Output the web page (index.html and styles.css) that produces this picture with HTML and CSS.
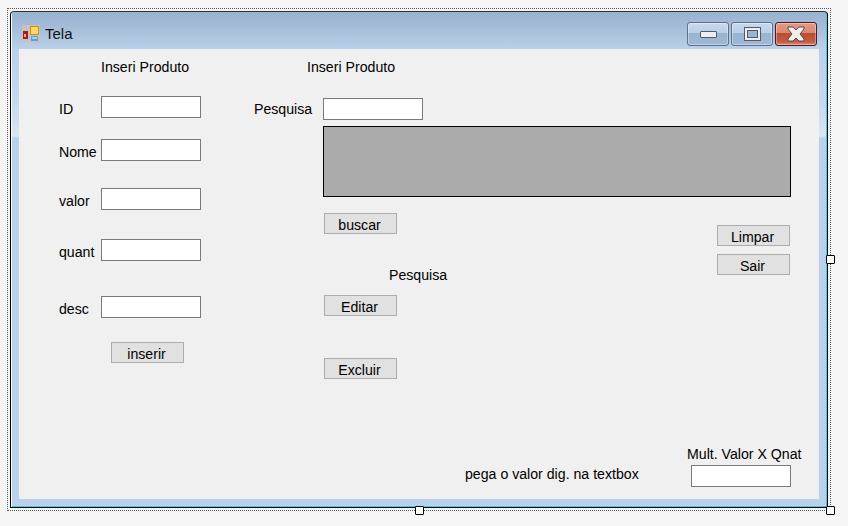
FILE: index.html
```html
<!DOCTYPE html>
<html lang="pt">
<head>
    <meta charset="UTF-8">
    <title>Tela</title>
    <link rel="stylesheet" href="styles.css">
</head>
<body>

    <div class="selection">
        <div class="window">
            <div class="titlebar">
                <svg class="app-icon" width="18" height="18" viewBox="0 0 18 18">
                    <rect width="18" height="18" fill="#c4c4c4"/>
                    <rect x="1" y="6" width="5" height="8" fill="#a81c14"/>
                    <rect x="2" y="9" width="2" height="3" fill="#f0a0a0"/>
                    <rect x="8" y="1" width="9" height="9" fill="#c98f10"/>
                    <rect x="9" y="2" width="7" height="7" fill="#fbd960"/>
                    <rect x="9" y="11" width="7" height="5" fill="#5f9be0"/>
                    <rect x="10" y="12" width="5" height="2" fill="#a9cdf5"/>
                </svg>
                <span class="title">Tela</span>
                <div class="caption-btns">
                    <div class="cap cap-min"><span class="min-glyph"></span></div>
                    <div class="cap cap-max"><span class="max-glyph"></span></div>
                    <div class="cap cap-close">
                        <svg width="20" height="16" viewBox="0 0 20 16">
                            <path d="M2 1h5l3 3 3-3h5v2l-4 5 4 5v2h-5l-3-3-3 3H2v-2l4-5-4-5z" fill="#eee" stroke="#5a4a4a"/>
                        </svg>
                    </div>
                </div>
            </div>

            <div class="client">
                <span class="label l-head1">Inseri Produto</span>
                <span class="label l-head2">Inseri Produto</span>

                <span class="label l-id">ID</span>
                <input class="textbox t-id" type="text">
                <span class="label l-nome">Nome</span>
                <input class="textbox t-nome" type="text">
                <span class="label l-valor">valor</span>
                <input class="textbox t-valor" type="text">
                <span class="label l-quant">quant</span>
                <input class="textbox t-quant" type="text">
                <span class="label l-desc">desc</span>
                <input class="textbox t-desc" type="text">
                <button class="btn b-inserir">inserir</button>

                <span class="label l-pesquisa">Pesquisa</span>
                <input class="textbox t-pesquisa" type="text">
                <div class="grid"></div>
                <button class="btn b-buscar">buscar</button>
                <span class="label l-pesquisa2">Pesquisa</span>
                <button class="btn b-editar">Editar</button>
                <button class="btn b-excluir">Excluir</button>

                <button class="btn b-limpar">Limpar</button>
                <button class="btn b-sair">Sair</button>

                <span class="label l-pega">pega o valor dig. na textbox</span>
                <span class="label l-mult">Mult. Valor X Qnat</span>
                <input class="textbox t-mult" type="text">
            </div>
        </div>

        <span class="handle h-right"></span>
        <span class="handle h-bottom"></span>
        <span class="handle h-corner"></span>
    </div>

</body>
</html>
```

FILE: styles.css
```css
html {
    background-color: #f5f5f5;
}

body {
    box-sizing: border-box;
    height: 526px;
    margin: 0;
    padding: 8px 0 0 7px;
    background-color: #f5f5f5;
    font-family: "Liberation Sans", Arial, sans-serif;
    font-size: 14.15px;
    color: #000;
}

/* Designer selection frame */
.selection {
    position: relative;
    box-sizing: border-box;
    width: 824px;
    height: 503px;
    padding: 2px;
    border: 1px dotted #555;
}

.handle {
    position: absolute;
    box-sizing: border-box;
    width: 9px;
    height: 9px;
    background-color: #fff;
    border: 1px solid #000;
    border-radius: 1px;
}

.h-right { left: 818px; top: 246px; }
.h-bottom { left: 407px; top: 497px; }
.h-corner { left: 818px; top: 497px; }

/* Form window */
.window {
    box-sizing: border-box;
    width: 818px;
    height: 497px;
    display: flex;
    flex-direction: column;
    padding: 0 8px 8px 8px;
    border: 1px solid #000;
    border-top-color: #333;
    border-radius: 4px 4px 0 0;
    box-shadow: inset 1px 0 0 #fff, inset -1px 0 0 #2bd3ee, inset 0 -1px 0 #2bd3ee;
    background: linear-gradient(to bottom, #9ab3d0 0, #a3bbd7 14px, #b9d1ea 37px, #c6d9ee 90px, #d8e5f3 124px, #b9d1ea 126px, #b9d1ea 100%);
}

.titlebar {
    display: flex;
    align-items: flex-start;
    height: 37px;
    flex-shrink: 0;
}

.app-icon {
    margin-top: 13px;
    margin-left: 3px;
}

.title {
    margin-top: 13px;
    margin-left: 5px;
    font-size: 15px;
    line-height: 18px;
    color: #111;
}

.caption-btns {
    display: flex;
    gap: 2px;
    margin-left: auto;
    margin-top: 10px;
    margin-right: 2px;
}

.cap {
    box-sizing: border-box;
    width: 42px;
    height: 24px;
    display: flex;
    align-items: center;
    justify-content: center;
    border: 1px solid #5f6f8e;
    border-radius: 3px;
    background: linear-gradient(to bottom, #c8daec 0, #b8cfe6 46%, #99b4d1 47%, #a0b9d4 100%);
    box-shadow: inset 0 0 0 1px rgba(255, 255, 255, 0.35);
}

.cap-close {
    border-color: #4e1a22;
    background: linear-gradient(to bottom, #e69a88 0, #d98772 46%, #bd4b2c 47%, #c45c44 85%, #d98c7c 100%);
}

.min-glyph {
    display: block;
    box-sizing: border-box;
    width: 17px;
    height: 7px;
    margin-top: 1px;
    background-color: #eee;
    border: 1px solid #4f5a75;
    border-radius: 1px;
}

.max-glyph {
    display: block;
    box-sizing: border-box;
    width: 17px;
    height: 14px;
    background-color: #99b4d1;
    border: 3px solid #eee;
    outline: 1px solid #4f5a75;
    outline-offset: -1px;
    box-shadow: inset 0 0 0 1px #4f5a75;
}

/* Form surface, controls sit where the designer dropped them */
.client {
    position: relative;
    flex: 1;
    background-color: #f0f0f0;
}

.label {
    position: absolute;
    line-height: 15px;
    white-space: nowrap;
}

.textbox {
    position: absolute;
    box-sizing: border-box;
    width: 100px;
    height: 22px;
    margin: 0;
    padding: 0;
    background-color: #fff;
    border: 1px solid #7a7a7a;
}

.btn {
    position: absolute;
    box-sizing: border-box;
    width: 73px;
    height: 21px;
    padding: 4px 2px 0 0;
    font-family: inherit;
    font-size: 14.15px;
    line-height: 15px;
    color: #000;
    background-color: #e1e1e1;
    border: 1px solid #adadad;
}

.grid {
    position: absolute;
    box-sizing: border-box;
    left: 304px;
    top: 77px;
    width: 468px;
    height: 71px;
    background-color: #ababab;
    border: 1px solid #000;
}

.l-head1 { left: 82px; top: 11px; }
.l-head2 { left: 288px; top: 11px; }
.l-id { left: 40px; top: 53px; }
.l-nome { left: 40px; top: 96px; }
.l-valor { left: 40px; top: 145px; }
.l-quant { left: 40px; top: 196px; }
.l-desc { left: 40px; top: 253px; }
.l-pesquisa { left: 235px; top: 53px; }
.l-pesquisa2 { left: 370px; top: 219px; }
.l-pega { left: 446px; top: 418px; }
.l-mult { left: 668px; top: 398px; }

.t-id { left: 82px; top: 47px; }
.t-nome { left: 82px; top: 90px; }
.t-valor { left: 82px; top: 139px; }
.t-quant { left: 82px; top: 190px; }
.t-desc { left: 82px; top: 247px; }
.t-pesquisa { left: 304px; top: 49px; }
.t-mult { left: 672px; top: 416px; }

.b-inserir { left: 92px; top: 293px; }
.b-buscar { left: 305px; top: 164px; }
.b-editar { left: 305px; top: 246px; }
.b-excluir { left: 305px; top: 309px; }
.b-limpar { left: 698px; top: 176px; }
.b-sair { left: 698px; top: 205px; }
```
